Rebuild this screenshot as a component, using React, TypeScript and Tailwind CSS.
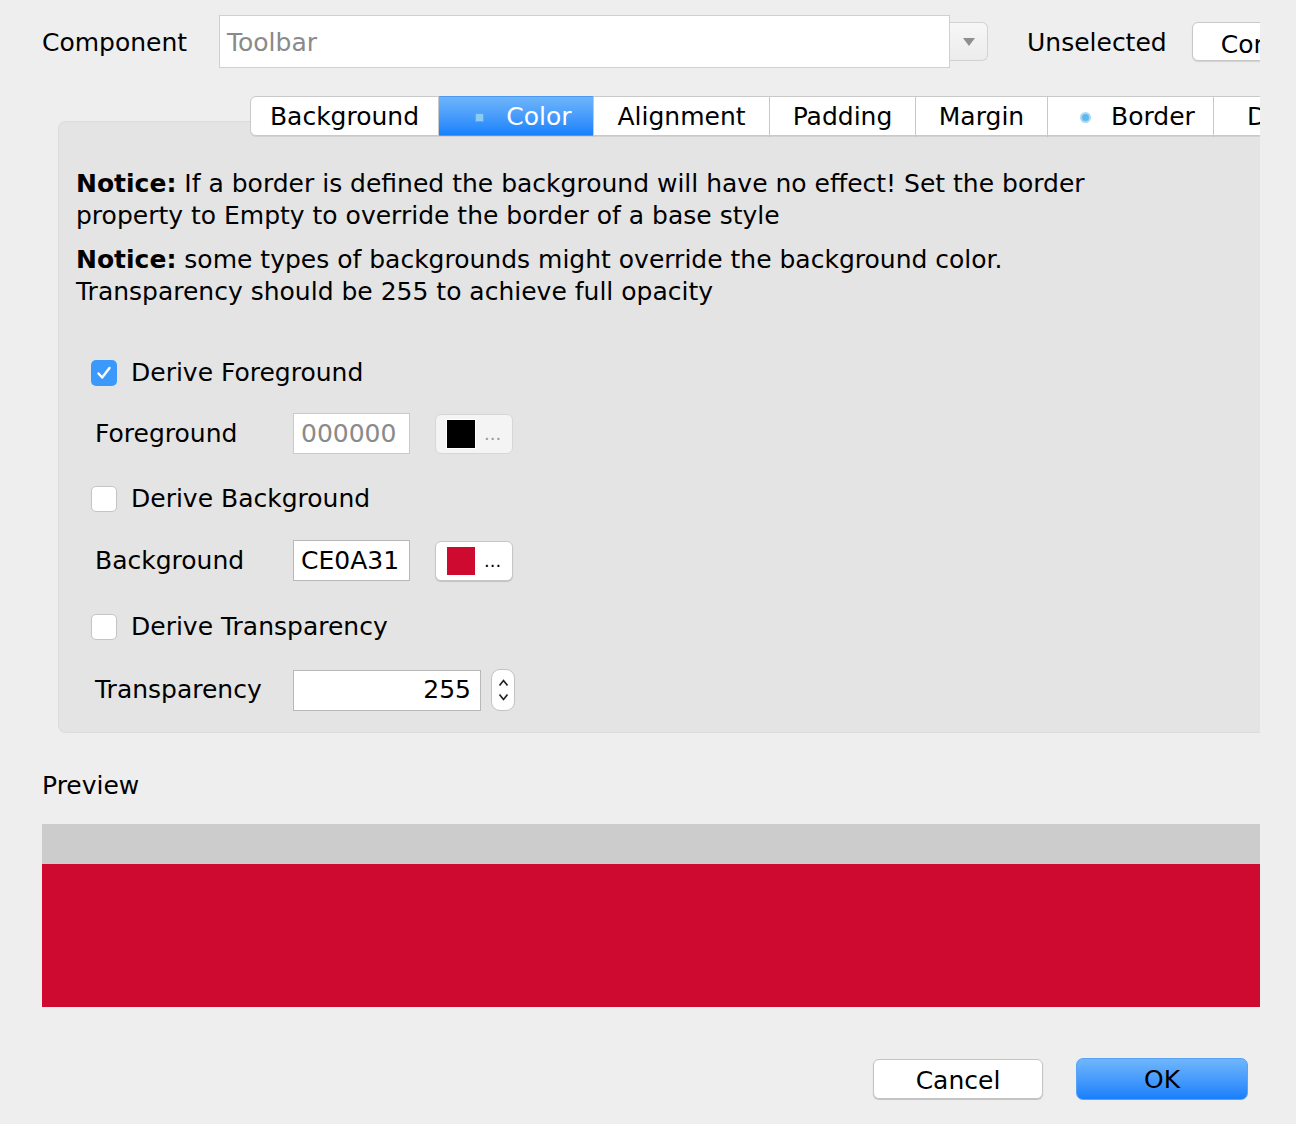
import React from "react";

const font = "font-['DejaVu_Sans',sans-serif]";

type Tab = { label: string; width: string; dot?: "square" | "round"; active?: boolean };

const tabs: Tab[] = [
  { label: "Background", width: "w-[189px]" },
  { label: "Color", width: "w-[155px]", dot: "square", active: true },
  { label: "Alignment", width: "w-[177px]" },
  { label: "Padding", width: "w-[147px]" },
  { label: "Margin", width: "w-[133px]" },
  { label: "Border", width: "w-[167px]", dot: "round" },
  { label: "Derive", width: "w-[150px]" },
];

const Checkbox: React.FC<{ checked?: boolean; label: string }> = ({ checked, label }) => (
  <div className="flex items-center h-[26px] pl-[32px]">
    {checked ? (
      <span className="w-[26px] h-[26px] rounded-[5px] bg-[#3b99fc] flex items-center justify-center">
        <svg width="20" height="20" viewBox="0 0 20 20">
          <path d="M4.5 10.5l3.7 4L15.5 5" fill="none" stroke="white" strokeWidth="2.4" strokeLinecap="round" strokeLinejoin="round" />
        </svg>
      </span>
    ) : (
      <span className="w-[26px] h-[26px] rounded-[5px] bg-white border border-[#c4c4c4]" />
    )}
    <span className="ml-[14px]">{label}</span>
  </div>
);

const ColorButton: React.FC<{ color: string; disabled?: boolean }> = ({ color, disabled }) => (
  <button
    className={
      disabled
        ? "ml-[25px] w-[78px] h-[40px] rounded-[6px] bg-[#f4f4f4] border border-[#d6d6d6] flex items-center pl-[10px]"
        : "ml-[25px] w-[78px] h-[40px] rounded-[6px] bg-white border border-[#c6c6c6] shadow-[0_1px_1px_rgba(0,0,0,0.15)] flex items-center pl-[10px]"
    }
  >
    <span className="w-[30px] h-[30px] border border-white" style={{ backgroundColor: color }} />
    <span className={disabled ? "ml-[8px] text-[#9a9a9a] text-[18px] leading-none" : "ml-[8px] text-black text-[18px] leading-none"}>...</span>
  </button>
);

const FieldRow: React.FC<{ label: string; children: React.ReactNode }> = ({ label, children }) => (
  <div className="flex items-center pl-[36px]">
    <span className="w-[198px]">{label}</span>
    {children}
  </div>
);

export default function App() {
  return (
    <div className={`w-[1296px] h-[1124px] bg-[#eeeeee] text-black text-[25px] ${font} overflow-hidden`}>
      <div className="w-[1260px] overflow-hidden pl-[42px]">
        {/* component selector */}
        <div className="flex items-center mt-[15px] h-[53px] whitespace-nowrap">
          <span className="w-[177px] shrink-0 pt-[3px]">Component</span>
          <div className="w-[731px] shrink-0 h-[53px] bg-white border border-[#d0d0d0] flex items-center pl-[7px] pt-[3px] text-[#8a8a8a]">
            Toolbar
          </div>
          <div className="w-[38px] shrink-0 h-[39px] rounded-r-[6px] border border-[#d2d2d2] border-l-0 bg-gradient-to-b from-[#f7f7f7] to-[#ececec] flex items-center justify-center">
            <svg width="14" height="10" viewBox="0 0 14 10">
              <path d="M1 1h12L7 9z" fill="#8f8f8f" />
            </svg>
          </div>
          <span className="ml-[39px] shrink-0 pt-[3px]">Unselected</span>
          <button className="ml-[25px] w-[140px] h-[39px] shrink-0 rounded-[6px] bg-white border border-[#c8c8c8] shadow-[0_1px_1px_rgba(0,0,0,0.12)] text-left pl-[28px] pt-[3px]">
            Combined
          </button>
        </div>

        {/* tabs */}
        <div className="relative z-10 flex mt-[28px] ml-[209px] h-[40px] whitespace-nowrap">
          {tabs.map((t, i) => (
            <div
              key={t.label}
              className={
                (t.active
                  ? "bg-gradient-to-b from-[#6db5fb] to-[#1681fb] text-white border-y border-[#4a9af5]"
                  : "bg-white border border-[#c9c9c9] -ml-px") +
                (i === 0 ? " rounded-l-[6px]" : "") +
                (t.dot ? " pl-[14px]" : "") +
                ` ${t.width} shrink-0 flex items-center justify-center pt-[2px] shadow-[0_1px_0_rgba(0,0,0,0.08)]`
              }
            >
              {t.dot === "square" && (
                <span className="w-[9px] h-[9px] bg-[#8ccbf5] border border-[#5aa8e8] mr-[22px]" />
              )}
              {t.dot === "round" && (
                <span className="w-[11px] h-[11px] rounded-full bg-[#63b6ec] border-2 border-[#a6d9f7] mr-[20px]" />
              )}
              <span>{t.label}</span>
            </div>
          ))}
        </div>

        {/* style panel */}
        <div className="-mt-[15px] ml-[16px] h-[612px] bg-[#e4e4e4] rounded-l-[8px] border border-[#dcdcdc] border-r-0 pt-[46px]">
          <div className="pl-[17px] leading-[32px]">
            <p>
              <b>Notice:</b> If a border is defined the background will have no effect! Set the border
              <br />
              property to Empty to override the border of a base style
            </p>
            <p className="mt-[12px]">
              <b>Notice:</b> some types of backgrounds might override the background color.
              <br />
              Transparency should be 255 to achieve full opacity
            </p>
          </div>

          <div className="mt-[52px] flex flex-col">
            <Checkbox checked label="Derive Foreground" />
            <div className="mt-[27px]">
              <FieldRow label="Foreground">
                <div className="w-[117px] h-[41px] bg-white border border-[#cacaca] flex items-center pl-[7px] text-[#8a8a8a]">
                  000000
                </div>
                <ColorButton color="#000000" disabled />
              </FieldRow>
            </div>
            <div className="mt-[32px]">
              <Checkbox label="Derive Background" />
            </div>
            <div className="mt-[28px]">
              <FieldRow label="Background">
                <div className="w-[117px] h-[41px] bg-white border border-[#b8b8b8] flex items-center pl-[7px]">
                  CE0A31
                </div>
                <ColorButton color="#ce0a31" />
              </FieldRow>
            </div>
            <div className="mt-[33px]">
              <Checkbox label="Derive Transparency" />
            </div>
            <div className="mt-[29px]">
              <FieldRow label="Transparency">
                <div className="w-[188px] h-[41px] bg-white border border-[#b8b8b8] flex items-center justify-end pr-[9px]">
                  255
                </div>
                <div className="ml-[10px] w-[24px] h-[42px] rounded-[9px] bg-white border border-[#c2c2c2] flex flex-col items-center justify-center gap-[6px]">
                  <svg width="11" height="8" viewBox="0 0 11 8">
                    <path d="M1.5 6.5l4-5 4 5" fill="none" stroke="#222" strokeWidth="1.7" />
                  </svg>
                  <svg width="11" height="8" viewBox="0 0 11 8">
                    <path d="M1.5 1.5l4 5 4-5" fill="none" stroke="#222" strokeWidth="1.7" />
                  </svg>
                </div>
              </FieldRow>
            </div>
          </div>
        </div>

        {/* preview */}
        <div className="mt-[38px] h-[30px] flex items-center">Preview</div>
        <div className="mt-[23px] h-[40px] bg-[#cccccc]" />
        <div className="h-[143px] bg-[#ce0a31]" />

        {/* dialog buttons */}
        <div className="flex justify-end mt-[51px] pr-[12px] items-center">
          <button className="w-[170px] h-[40px] rounded-[6px] bg-white border border-[#c4c4c4] shadow-[0_1px_1px_rgba(0,0,0,0.2)] pt-[2px]">
            Cancel
          </button>
          <button className="ml-[33px] w-[172px] h-[42px] rounded-[7px] bg-gradient-to-b from-[#6fb6fc] to-[#167ffb] border border-[#58a3f5] text-black pt-[2px]">
            OK
          </button>
        </div>
      </div>
    </div>
  );
}
